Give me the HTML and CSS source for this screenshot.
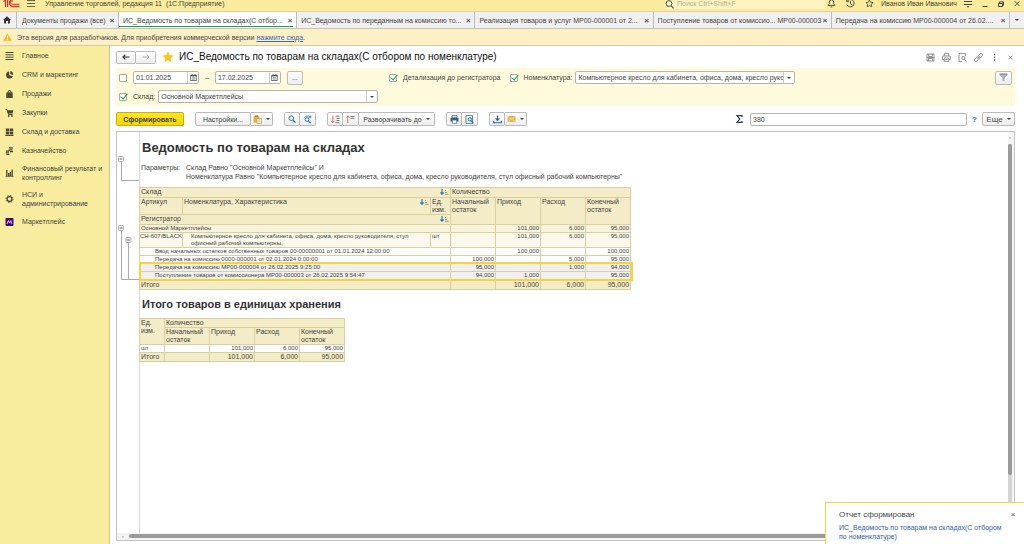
FILE: index.html
```html
<!DOCTYPE html>
<html lang="ru">
<head>
<meta charset="utf-8">
<title>Управление торговлей, редакция 11</title>
<link rel="stylesheet" href="styles.css">
</head>
<body>
<svg class="defs" aria-hidden="true">
  <symbol id="sort" viewBox="0 0 9 6"><path d="M2 0v5M.5 3.5L2 5.2l1.500-1.700" stroke="#2b7fb8" stroke-width="1.200" fill="none"/><path d="M5 1.500h1M5 3.500h2M5 5.300h3.500" stroke="#8a8567" stroke-width=".8"/></symbol>
  <symbol id="cal" viewBox="0 0 7 7"><path d="M.7 1.500h5.600v5H.7z" fill="#fff" stroke="#555" stroke-width=".8"/><path d="M.5 1.800h6M2 .2v1.500M5 .2v1.500" stroke="#444"/><path d="M2 3.700h3M2 5.100h3" stroke="#666" stroke-width=".7"/></symbol>
  <symbol id="star" viewBox="0 0 12 12"><path d="M6 .3l1.700 3.800 4.100.4-3.100 2.700.9 4.100L6 9.200l-3.600 2.100.9-4.100L.2 4.500l4.100-.4z"/></symbol>
</svg>

<header class="topbar">
  <svg class="logo" width="17" height="9" viewBox="0 0 17 9"><g fill="none" stroke="#d8342c" stroke-width="1.300"><path d="M.5 1.500L2.500.2V7M4.600 7V-1"/><path d="M11.500-.5A3.600 3.600 0 1 0 9 6.500h7.500"/><path d="M10.200 1.200A1.700 1.700 0 1 0 9 4.300h7.500" stroke-width="1"/></g></svg>
  <button class="bare" aria-label="Меню"><svg width="8" height="8" viewBox="0 0 8 8"><path d="M0 .5h8M0 3.500h8M0 6.500h8" stroke="#6b6548"/></svg></button>
  <span class="app-title">Управление торговлей, редакция 11&nbsp; (1С:Предприятие)</span>
  <label class="search"><svg width="9" height="9" viewBox="0 0 9 9"><circle cx="4" cy="3.500" r="2.900" fill="none" stroke="#555"/><path d="M6 5.700l2.500 2.600" stroke="#555" stroke-width="1.200"/></svg><input type="text" placeholder="Поиск Ctrl+Shift+F" aria-label="Поиск"></label>
  <div class="top-tools">
    <button class="bare" aria-label="Уведомления"><svg width="9" height="9" viewBox="0 0 9 9"><path d="M1 6.500h7L6.700 5V3a2.200 2.200 0 0 0-4.400 0v2zM3.600 8h1.800" fill="none" stroke="#444" stroke-width=".9"/></svg></button>
    <button class="bare" aria-label="История"><svg width="9" height="9" viewBox="0 0 9 9"><path d="M1.200 2.300A3.700 3.700 0 1 1 .9 5.500M.8.500v2.200H3M4.500 2v2.700l1.800 1" fill="none" stroke="#444" stroke-width=".9"/></svg></button>
    <button class="bare" aria-label="Избранное"><svg width="9" height="9" viewBox="-1 -1 14 14" fill="none" stroke="#444" stroke-width="1.300"><use href="#star" width="12" height="12"/></svg></button>
    <span class="user">Иванов Иван Иванович</span>
    <button class="bare" aria-label="Настройки окна"><svg width="8" height="8" viewBox="0 0 8 8"><path d="M0 1.500h8M0 4.500h8" stroke="#444"/><path d="M2.500 6.200h3L4 7.700z" fill="#444"/></svg></button>
    <button class="bare" aria-label="Свернуть"><svg width="6" height="8" viewBox="0 0 6 8"><path d="M.5 6.500h5" stroke="#444"/></svg></button>
    <button class="bare" aria-label="Развернуть"><svg width="6" height="8" viewBox="0 0 6 8"><path d="M.5 3.500h4v3h-4zM1.500 3V1.900h4v3.600" fill="none" stroke="#444"/></svg></button>
    <button class="bare" aria-label="Закрыть"><svg width="6" height="8" viewBox="0 0 6 8"><path d="M.7 1.200L5.500 6M5.500 1.200L.7 6" stroke="#444" stroke-width=".9"/></svg></button>
  </div>
</header>

<nav class="tabs">
  <button class="home" aria-label="Начальная страница"><svg width="8" height="8" viewBox="0 0 8 8"><path d="M4 .3l4 3.800H6.900V7.500H5V5H3v2.500H1.100V4.100H0z" fill="#333"/></svg></button>
  <div class="tab tab-first"><a href="#">Документы продажи (все)</a><button class="x" aria-label="Закрыть">×</button></div>
  <div class="tab active"><a href="#">ИС_Ведомость по товарам на складах(С отбор...</a><button class="x" aria-label="Закрыть">×</button></div>
  <div class="tab"><a href="#">ИС_Ведомость по переданным на комиссию то...</a><button class="x" aria-label="Закрыть">×</button></div>
  <div class="tab"><a href="#">Реализация товаров и услуг МР00-000001 от 2...</a><button class="x" aria-label="Закрыть">×</button></div>
  <div class="tab"><a href="#">Поступление товаров от комиссио... МР00-000003</a><button class="x" aria-label="Закрыть">×</button></div>
  <div class="tab"><a href="#">Передача на комиссию МР00-000004 от 26.02....</a><button class="x" aria-label="Закрыть">×</button></div>
  <button class="more-tabs" aria-label="Список вкладок"><span class="caret"></span></button>
</nav>

<div class="notice">
  <svg width="9" height="8" viewBox="0 0 9 8"><path d="M4.500.3L8.800 7.700H.2z" fill="#f7bd1c"/><path d="M4.500 2.800v2.500M4.500 6v1" stroke="#fff" stroke-width=".9"/></svg>
  <span>Эта версия для разработчиков. Для приобретения коммерческой версии <a href="#">нажмите сюда</a>.</span>
</div>

<div class="workspace">
  <aside class="sidebar">
    <a href="#"><svg width="8" height="8" viewBox="0 0 8 8"><path d="M0 .5h8M0 2.800h8M0 5.200h8M0 7.500h8" stroke="#4a4636"/></svg><span>Главное</span></a>
    <a href="#"><svg width="8" height="8" viewBox="0 0 8 8"><path d="M3.700.6a3.500 3.500 0 1 0 3.700 4.600L3.700 4.300z" fill="#4a4636"/><path d="M4.800.3a3.300 3.300 0 0 1 2.900 3.400L4.800 3.200z" fill="#4a4636"/></svg><span>CRM и маркетинг</span></a>
    <a href="#"><svg width="8" height="8" viewBox="0 0 8 8"><path d="M.8 2.500h6.400V8H.8z" fill="#4a4636"/><path d="M2.500 4V2a1.500 1.500 0 0 1 3 0v2" fill="none" stroke="#4a4636" stroke-width=".9"/></svg><span>Продажи</span></a>
    <a href="#"><svg width="8" height="8" viewBox="0 0 8 8"><path d="M0 .6h1.500L3 5.500h4" fill="none" stroke="#4a4636"/><path d="M1.800 1.300H8L7 4.600H2.700z" fill="#4a4636"/><circle cx="3.200" cy="7" r=".9" fill="#4a4636"/><circle cx="6.500" cy="7" r=".9" fill="#4a4636"/></svg><span>Закупки</span></a>
    <a href="#"><svg width="8" height="8" viewBox="0 0 8 8"><path d="M.3.500h3.400v3H.3zM4.300.500h3.400v3H4.300zM.3 4h3.400v2.500H.3zM4.300 4h3.400v2.500H4.300zM0 7h8v.9H0z" fill="#4a4636"/></svg><span>Склад и доставка</span></a>
    <a href="#"><svg width="8" height="8" viewBox="0 0 8 8"><path d="M3.500.3h4v1.300h-4zM3 2.200h4v1.200H3zM4.500 4h3v1.200h-3zM.5 3.500h3.300v1.200H.5zM.2 5.300h3.500v1.100H.2zM.8 6.900h3.200V8H.8z" fill="#4a4636"/></svg><span>Казначейство</span></a>
    <a href="#" class="two"><svg width="8" height="8" viewBox="0 0 8 8"><path d="M1.300 1v6M3.200 4v3M4.900 3v4M6.700 .5v6.500" stroke="#4a4636" stroke-width="1.300"/><path d="M0 7.400h8" stroke="#4a4636" stroke-width=".8"/></svg><span>Финансовый результат и контроллинг</span></a>
    <a href="#" class="two"><svg width="8" height="8" viewBox="0 0 8 8"><circle cx="4" cy="4" r="2.400" fill="none" stroke="#4a4636" stroke-width="1.300"/><circle cx="4" cy="4" r="3.500" fill="none" stroke="#4a4636" stroke-width="1" stroke-dasharray="1.300 1.450"/></svg><span>НСИ и администрирование</span></a>
    <a href="#"><svg width="9" height="9" viewBox="0 0 9 9"><rect width="9" height="9" rx="1" fill="#3c0a78"/><path d="M1.800 6.700L3.300 2.800l1.300 3 1.300-3 1.400 3.900" fill="none" stroke="#e7b7f2" stroke-width="1.100"/></svg><span>Маркетплейс</span></a>
  </aside>

  <main class="page">
    <div class="page-head">
      <div class="group">
        <button class="btn nav" aria-label="Назад"><svg width="8" height="6" viewBox="0 0 8 6"><path d="M7.500 3H1M3.300.7L1 3l2.300 2.300" fill="none" stroke="#333" stroke-width="1.200"/></svg></button>
        <button class="btn nav" aria-label="Вперёд"><svg width="8" height="6" viewBox="0 0 8 6"><path d="M.5 3H7M4.700.7L7 3 4.700 5.300" fill="none" stroke="#aaa"/></svg></button>
      </div>
      <svg class="fav" width="12" height="12" viewBox="0 0 12 12" fill="#fbc51d"><use href="#star"/></svg>
      <h1>ИС_Ведомость по товарам на складах(С отбором по номенклатуре)</h1>
      <div class="head-tools">
        <button class="bare" aria-label="Сохранить"><svg width="9" height="9" viewBox="0 0 9 9"><path d="M1 1h7v7H1zM2.700 1v2.500h3.600V1M2.500 8V5.500h4V8M1 4.500h7" fill="none" stroke="#777" stroke-width=".8"/></svg></button>
        <button class="bare" aria-label="Печать"><svg width="9" height="9" viewBox="0 0 9 9"><path d="M2.300 3V.6h4.400V3M2 6.500H.6V3h7.800v3.500H7M2.300 5h4.400v3.400H2.300zM3.300 6.600h2.400" fill="none" stroke="#777" stroke-width=".8"/></svg></button>
        <button class="bare" aria-label="Просмотр"><svg width="9" height="9" viewBox="0 0 9 9"><path d="M4 8.400H1V.6h6.500v2.700" fill="none" stroke="#777" stroke-width=".8"/><circle cx="5.300" cy="5" r="1.600" fill="none" stroke="#777" stroke-width=".8"/><path d="M6.400 6.200l2 2.200" stroke="#777"/></svg></button>
        <button class="bare" aria-label="Ссылка"><svg width="9" height="9" viewBox="0 0 9 9"><g transform="rotate(-45 4.500 4.500)" fill="none" stroke="#777" stroke-width=".8"><rect x="-.5" y="3" width="5" height="3" rx="1.500"/><rect x="4.500" y="3" width="5" height="3" rx="1.500"/><path d="M2.800 4.500h3.400"/></g></svg></button>
        <button class="bare" aria-label="Ещё"><svg width="9" height="9" viewBox="0 0 9 9"><path d="M4 1.500h1.200M4 4.200h1.200M4 7h1.200" stroke="#555" stroke-width="1.300"/></svg></button>
        <button class="bare" aria-label="Закрыть"><svg width="9" height="9" viewBox="0 0 9 9"><path d="M2.700 2.700l3.600 3.600M6.300 2.700L2.700 6.300" stroke="#777" stroke-width=".8"/></svg></button>
      </div>
    </div>

    <section class="filters">
      <div class="filter-row">
        <div class="period">
          <input type="checkbox" aria-label="Период">
          <div class="field date"><input type="text" value="01.01.2025" aria-label="Начало периода"><button aria-label="Календарь"><svg width="7" height="7"><use href="#cal"/></svg></button></div>
          <span>–</span>
          <div class="field date"><input type="text" value="17.02.2025" aria-label="Конец периода"><button aria-label="Календарь"><svg width="7" height="7"><use href="#cal"/></svg></button></div>
          <button class="btn dots">...</button>
        </div>
        <label class="check detail"><input type="checkbox" checked>Детализация до регистратора</label>
        <label class="check"><input type="checkbox" checked>Номенклатура:</label>
        <div class="field item"><select aria-label="Номенклатура"><option>Компьютерное кресло для кабинета, офиса, дома, кресло руководителя</option></select><span class="drop"><span class="caret"></span></span></div>
        <button class="btn funnel" aria-label="Фильтр"><svg width="9" height="9" viewBox="0 0 9 9"><path d="M.5.800h8v1.500L5.700 5v3.500L3.400 7.400V5L.5 2.300z" fill="#a9b3be"/><path d="M.5 1h8" stroke="#7d8893"/></svg></button>
      </div>
      <div class="filter-row">
        <label class="check"><input type="checkbox" checked>Склад:</label>
        <div class="field stock"><select aria-label="Склад"><option>Основной Маркетплейсы</option></select><span class="drop"><span class="caret"></span></span></div>
      </div>
    </section>

    <div class="toolbar">
      <button class="btn primary">Сформировать</button>
      <div class="group">
        <button class="btn settings">Настройки...</button>
        <button class="btn icon wide" aria-label="Варианты"><svg width="9" height="9" viewBox="0 0 9 9"><path d="M.5 1.200h6v6.500h-6z" fill="#e8b04c"/><path d="M2 .3h3v1.700H2z" fill="#b98330"/><path d="M4 3.500h4.500v5H4z" fill="#fff" stroke="#d29a3c" stroke-width=".7"/><path d="M5 5h2.500M5 6.500h2.500" stroke="#d29a3c" stroke-width=".6"/></svg><span class="caret"></span></button>
      </div>
      <div class="group">
        <button class="btn icon" aria-label="Найти"><svg width="8" height="8" viewBox="0 0 8 8"><circle cx="3.300" cy="3.200" r="2.300" fill="#e6f3fb" stroke="#2678ad"/><path d="M5 5l2.500 2.600" stroke="#2678ad" stroke-width="1.300"/></svg></button>
        <button class="btn icon" aria-label="Найти далее"><svg width="9" height="9" viewBox="0 0 9 9"><circle cx="4" cy="4.500" r="1.900" fill="none" stroke="#2678ad"/><path d="M5.500 6l2.300 2.300" stroke="#2678ad" stroke-width="1.200"/><path d="M1 3.300C2.300.6 6 .4 7.500 2.300M7.800.5v2.200H5.600" fill="none" stroke="#2678ad" stroke-width=".8"/></svg></button>
      </div>
      <div class="group">
        <button class="btn icon" aria-label="Развернуть"><svg width="9" height="9" viewBox="0 0 9 9"><path d="M1.800.5v7M.3 6l1.500 1.700L3.300 6" fill="none" stroke="#e0523a" stroke-width=".8"/><path d="M4.500 1.200h4M5.500 3.500h3M5.500 5.500h3M4.500 7.700h4" stroke="#777"/></svg></button>
        <button class="btn icon" aria-label="Свернуть"><svg width="9" height="9" viewBox="0 0 9 9"><path d="M1.800 8V1M.3 2.500L1.800.8l1.500 1.700" fill="none" stroke="#e0523a" stroke-width=".8"/><path d="M4.500 1.500h4M4.500 3.300h4" stroke="#777"/></svg></button>
        <button class="btn expand">Разворачивать до<span class="caret"></span></button>
      </div>
      <div class="group">
        <button class="btn icon" aria-label="Печать"><svg width="9" height="9" viewBox="0 0 9 9"><path d="M2 .7h5v2H2z" fill="#fff" stroke="#35607f" stroke-width=".8"/><path d="M.5 2.800h8v3.700h-8z" fill="#35607f"/><path d="M2.300 5h4.400v3.300H2.300z" fill="#fff" stroke="#35607f" stroke-width=".7"/></svg></button>
        <button class="btn icon" aria-label="Предварительный просмотр"><svg width="9" height="9" viewBox="0 0 9 9"><path d="M1 .600h6.500v7.800H1z" fill="#fff" stroke="#35607f" stroke-width=".8"/><circle cx="4.800" cy="4.300" r="1.700" fill="#cfe7f6" stroke="#1f75ad"/><path d="M6 5.600l2.300 2.600" stroke="#1f75ad" stroke-width="1.300"/></svg></button>
      </div>
      <div class="group">
        <button class="btn icon" aria-label="Сохранить"><svg width="9" height="9" viewBox="0 0 9 9"><path d="M4.500.5V5M2.600 3.400l1.900 2 1.900-2" fill="none" stroke="#1f6691" stroke-width="1.200"/><path d="M.7 5.700v2h7.600v-2" fill="none" stroke="#1f6691" stroke-width="1.100"/></svg></button>
        <button class="btn icon wide" aria-label="Отправить"><svg width="9" height="8" viewBox="0 0 9 8"><path d="M.5 1h8v6h-8z" fill="#eab04a"/><path d="M.8 1.300l3.700 3 3.700-3M.8 6.800l2.500-2.500M8.200 6.800L5.700 4.300" fill="none" stroke="#fff2cf" stroke-width=".7"/></svg><span class="caret"></span></button>
      </div>
      <div class="sum">
        <svg width="7" height="8" viewBox="0 0 7 8"><path d="M6 2V.7H1L3.800 4 1 7.300h5V6" fill="none" stroke="#2a4456" stroke-width="1.200"/></svg>
        <input class="field" type="text" value="380" aria-label="Сумма">
        <button class="bare help" aria-label="Справка">?</button>
        <button class="btn more">Еще<span class="caret"></span></button>
      </div>
    </div>

    <section class="sheet">
      <svg class="tree" width="22" height="150" viewBox="0 0 22 150"><g fill="none" stroke="#aaa"><path d="M4.500 30v18.500H22M4.500 99v48.500H22M11.500 111v36.500"/><g fill="#fff" stroke="#999" stroke-width=".8"><rect x="1.500" y="24.500" width="5" height="5" rx="1"/><rect x="1.500" y="93.500" width="5" height="5" rx="1"/><rect x="9" y="105.500" width="5" height="5" rx="1"/></g><path d="M2.500 27h3M2.500 96h3M10 108h3" stroke="#666"/></g></svg>
      <div class="report">
        <h2>Ведомость по товарам на складах</h2>
        <dl class="params"><dt>Параметры:</dt><dd>Склад Равно "Основной Маркетплейсы" И<br>Номенклатура Равно "Компьютерное кресло для кабинета, офиса, дома, кресло руководителя, стул офисный рабочий компьютерны"</dd></dl>
        <table class="grid main-grid">
          <colgroup><col class="c-art"><col class="c-name"><col class="c-unit"><col class="c-num"><col class="c-num"><col class="c-num"><col class="c-num"></colgroup>
          <thead>
            <tr class="thin"><th colspan="3"><span class="th-in">Склад<svg width="9" height="6"><use href="#sort"/></svg></span></th><th colspan="4">Количество</th></tr>
            <tr><th>Артикул</th><th><span class="th-in">Номенклатура, Характеристика<svg width="9" height="6"><use href="#sort"/></svg></span></th><th>Ед. изм.</th><th rowspan="2">Начальный остаток</th><th rowspan="2">Приход</th><th rowspan="2">Расход</th><th rowspan="2">Конечный остаток</th></tr>
            <tr class="thin"><th colspan="3"><span class="th-in">Регистратор<svg width="9" height="6"><use href="#sort"/></svg></span></th></tr>
          </thead>
          <tbody>
            <tr class="lvl1"><td colspan="3">Основной Маркетплейсы</td><td></td><td class="n">101,000</td><td class="n">6,000</td><td class="n">95,000</td></tr>
            <tr class="lvl2"><td class="art">CH-607/BLACK</td><td class="name">Компьютерное кресло для кабинета, офиса, дома, кресло руководителя, стул офисный рабочий компьютерны,</td><td>шт</td><td></td><td class="n">101,000</td><td class="n">6,000</td><td class="n">95,000</td></tr>
            <tr><td colspan="3" class="doc">Ввод начальных остатков собственных товаров 00-00000001 от 01.01.2024 12:00:00</td><td></td><td class="n">100,000</td><td></td><td class="n">100,000</td></tr>
            <tr><td colspan="3" class="doc">Передача на комиссию 0000-000001 от 02.01.2024 0:00:00</td><td class="n">100,000</td><td></td><td class="n">5,000</td><td class="n">95,000</td></tr>
          </tbody>
          <tbody class="marked">
            <tr><td colspan="3" class="doc">Передача на комиссию МР00-000004 от 26.02.2025 9:25:00</td><td class="n">95,000</td><td></td><td class="n">1,000</td><td class="n">94,000</td></tr>
            <tr><td colspan="3" class="doc">Поступление товаров от комиссионера МР00-000003 от 26.02.2025 9:54:47</td><td class="n">94,000</td><td class="n">1,000</td><td></td><td class="n">95,000</td></tr>
          </tbody>
          <tfoot><tr><td colspan="3">Итого</td><td></td><td class="n">101,000</td><td class="n">6,000</td><td class="n">95,000</td></tr></tfoot>
        </table>
        <h3>Итого товаров в единицах хранения</h3>
        <table class="grid unit-grid">
          <colgroup><col class="c-unit2"><col class="c-num"><col class="c-num"><col class="c-num"><col class="c-num"></colgroup>
          <thead>
            <tr><th rowspan="2">Ед. изм.</th><th colspan="4">Количество</th></tr>
            <tr><th>Начальный остаток</th><th>Приход</th><th>Расход</th><th>Конечный остаток</th></tr>
          </thead>
          <tbody><tr><td>шт</td><td></td><td class="n">101,000</td><td class="n">6,000</td><td class="n">95,000</td></tr></tbody>
          <tfoot><tr><td>Итого</td><td></td><td class="n">101,000</td><td class="n">6,000</td><td class="n">95,000</td></tr></tfoot>
        </table>
      </div>
      <div class="vscroll"><b></b><div class="track"><i></i></div></div>
      <div class="hscroll"><b></b><i></i></div>
    </section>
  </main>
</div>

<div class="toast" role="status">
  <div><strong>Отчет сформирован</strong><button class="x" aria-label="Закрыть">×</button></div>
  <a href="#">ИС_Ведомость по товарам на складах(С отбором по номенклатуре)</a>
</div>
</body>
</html>
```
FILE: styles.css
```css
* { box-sizing: border-box; }
body {
  margin: 0;
  height: 100vh;
  display: flex;
  flex-direction: column;
  overflow: hidden;
  background: #fff;
  color: #444;
  font: 7px/9px "Liberation Sans", Arial, sans-serif;
}
button, input, select { font: inherit; color: inherit; margin: 0; padding: 0; }
button { display: flex; align-items: center; justify-content: center; }
a { color: inherit; text-decoration: none; }
svg { flex: none; display: block; overflow: visible; }
h1, h2, h3, dl, dd { margin: 0; }
.defs { position: absolute; width: 0; height: 0; }
.bare, .x { border: 0; background: none; }
.caret {
  border: 2px solid transparent;
  border-top-color: #444;
  border-bottom: 0;
  width: 0;
}

.topbar {
  display: flex;
  align-items: flex-start;
  height: 12px;
  padding-left: 3px;
  background: #fbec9d;
  border-bottom: 1px solid #dcd3a0;
}
.logo { margin-right: 7px; }
.app-title { margin-left: 10px; line-height: 7px; }
.search {
  display: flex;
  gap: 3px;
  width: 160px;
  height: 9px;
  margin-left: auto;
  background: #fdf3c0;
}
.search input { flex: 1; border: 0; background: none; height: 7px; }
.search input::placeholder { color: #b9b28e; opacity: 1; }
.top-tools { display: flex; align-items: center; gap: 10px; margin: 0 4px 0 2px; height: 7px; }
.user { margin: 0 -3px; line-height: 7px; }

.tabs {
  display: flex;
  height: 17px;
  background: #f0f0f0;
  border-bottom: 1px solid #c9c3ae;
}
.home { width: 16px; border: 0; background: none; padding-right: 3px; }
.tab {
  flex: 1 1 0;
  min-width: 0;
  display: flex;
  align-items: center;
  justify-content: space-between;
  padding: 0 3px 0 4px;
  border-left: 1px solid #bbb;
  white-space: nowrap;
}
.tab-first { flex: 0 0 102px; padding-left: 5px; }
.tab a { flex: 1; min-width: 0; overflow: hidden; }
.x { font-size: 8px; font-weight: bold; line-height: 9px; width: 6px; color: #555; }
.active { position: relative; background: #fff; }
.active::after {
  content: "";
  position: absolute;
  inset: auto 3px 1px 0;
  height: 1px;
  background: #16a65a;
}
.more-tabs { width: 15px; border: 0; border-left: 1px solid #bbb; background: none; }

.notice {
  display: flex;
  align-items: center;
  gap: 5px;
  height: 17px;
  padding-left: 3px;
  background: #fdf0c4;
  border-bottom: 1px solid #d2caa9;
}
.notice a { color: #3a68a8; text-decoration: underline; }

.workspace { flex: 1; min-height: 0; display: flex; }
.sidebar {
  flex: 0 0 110px;
  display: flex;
  flex-direction: column;
  gap: 10px;
  padding: 5px 4px 0 5px;
  background: #faec9e;
  border-right: 1px solid #cfc79c;
}
.sidebar a { display: flex; align-items: center; gap: 8px; }
.sidebar .two { margin: -1px 0; }
.sidebar span { flex: 1; }
.sidebar svg { width: 9px; height: 8px; }

.page {
  flex: 1;
  min-width: 0;
  display: flex;
  flex-direction: column;
  padding: 4px 9px 3px 6px;
}
.page-head { display: flex; align-items: center; height: 14px; }
.group { display: flex; }
.btn {
  height: 14px;
  border: 1px solid #bbb;
  border-radius: 2px;
  background: linear-gradient(#fff, #ededed);
  white-space: nowrap;
}
.group .btn + .btn { border-left: 0; border-radius: 0 2px 2px 0; }
.nav { width: 20px; height: 13px; }
.fav { margin: 0 5px 0 6px; }
h1 { font-size: 10px; line-height: 12px; font-weight: normal; color: #111; }
.head-tools { display: flex; gap: 7px; margin-left: auto; }

.filters {
  display: flex;
  flex-direction: column;
  gap: 6px;
  margin-top: 4px;
  padding: 3px;
  background: #fffadc;
}
.filter-row { display: flex; align-items: center; height: 13px; }
.period { display: flex; align-items: center; width: 270px; gap: 6px; }
.check { display: flex; align-items: center; gap: 6px; white-space: nowrap; margin-right: 3px; }
.detail { margin-right: 9px; }
input[type="checkbox"] {
  appearance: none;
  position: relative;
  width: 8px;
  height: 8px;
  border: 1px solid #aaa;
  border-radius: 1px;
  background: #fff;
}
input[type="checkbox"]:checked::after {
  content: "";
  position: absolute;
  left: 2px;
  top: -2px;
  width: 3px;
  height: 6px;
  border: solid #12a150;
  border-width: 0 1px 1px 0;
  outline: 0;
  transform: rotate(40deg);
}
.field {
  display: flex;
  height: 13px;
  border: 1px solid #b5b5b5;
  border-radius: 2px;
  background: #fff;
}
.field input, .field select {
  flex: 1;
  min-width: 0;
  appearance: none;
  border: 0;
  padding-left: 2px;
  background: none;
}
.date { width: 66px; }
.date button { width: 11px; border: 0; border-left: 1px solid #ccc; background: none; }
.drop { display: flex; align-items: center; justify-content: center; width: 11px; border-left: 1px solid #ccc; }
.dots { width: 16px; }
.item { width: 220px; }
.stock { width: 220px; }
.funnel { width: 17px; margin-left: auto; }

.toolbar { display: flex; align-items: center; gap: 11px; margin: 6px 0 5px; }
.primary {
  width: 68px;
  border-color: #c9ae14;
  background: linear-gradient(#ffe620, #f5d800);
  font-weight: bold;
}
.settings { width: 56px; }
.icon { width: 16px; }
.wide { width: 22px; gap: 4px; }
.expand { width: 76px; gap: 4px; }
.sum { flex: 1; display: flex; align-items: center; gap: 5px; max-width: 279px; margin-left: auto; }
.sum input { flex: 1; min-width: 0; margin-left: 2px; padding-left: 2px; }
.help { color: #2b86c5; font-weight: bold; font-size: 8px; }
.more { width: 33px; gap: 4px; font-size: 8px; }

.sheet {
  flex: 1;
  min-height: 0;
  display: grid;
  grid-template: minmax(0, 1fr) 7px / 22px minmax(0, 1fr) 6px;
  border: 1px solid #c4c4c4;
}
.report { overflow: hidden; box-shadow: inset 1px 0 #d8d8d8; }
h2 { padding: 9px 0 0 3px; font-size: 13px; line-height: 13px; color: #333; }
h3 { padding: 8px 0 7px 3px; font-size: 11px; line-height: 13px; color: #333; }
.params { display: flex; margin: 9px 0 6px; line-height: 9px; white-space: nowrap; }
.params dt { width: 47px; padding-left: 2px; }

.grid { table-layout: fixed; border-collapse: collapse; width: 0; font-size: 6px; line-height: 7px; }
.grid th, .grid td {
  border: 1px solid #d9cf9f;
  padding: 0 1px;
  font-weight: normal;
  text-align: left;
  vertical-align: top;
}
.grid th, .grid tfoot td { background: #f4ecc6; font-size: 7px; line-height: 8px; }
.grid .n { text-align: right; }
.grid tbody td { height: 8px; }
.grid .thin th { height: 10px; }
.grid .art { padding: 0; white-space: nowrap; }
.main-grid { width: 492px; }
.unit-grid { width: 205px; }
.c-art { width: 43px; }
.c-name { width: 248px; }
.c-unit { width: 20px; }
.c-unit2 { width: 25px; }
.c-num { width: 45px; }
.th-in { display: flex; justify-content: space-between; align-items: center; }
.lvl1 td { background: #f8f3da; }
.lvl2 td { background: #fcf9ec; }
.grid .name { padding-left: 8px; padding-right: 20px; }
.grid .doc { padding-left: 15px; }
.marked { position: relative; }
.marked td { background: #f0f0f0; }
.marked::after {
  content: "";
  position: absolute;
  inset: -2px -2px 0 -1px;
  border: 2px solid #fbd13a;
}
.vscroll, .hscroll { display: flex; background: #f4f4f4; }
.vscroll { flex-direction: column; padding-right: 2px; }
.vscroll b, .hscroll b { background: #ccc; width: 2px; height: 2px; }
.vscroll b { margin: 5px 1px; }
.hscroll b { margin: 2px 5px; }
.track { flex: 1; background: #d4d4d4; }
.vscroll i, .hscroll i { display: block; border-radius: 2px; background: #9a9a9a; }
.vscroll i { height: 85%; }
.hscroll { grid-column: 1 / -1; padding: 1px 0 2px; }
.hscroll i { flex: 1; }

.toast {
  position: absolute;
  right: 0;
  bottom: 0;
  width: 199px;
  height: 42px;
  padding: 7px 8px 0 13px;
  border: solid #fbd13a;
  border-width: 1px 0 0 1px;
  background: #fff;
}
.toast div { display: flex; justify-content: space-between; align-items: center; margin-bottom: 4px; }
.toast strong { font-size: 8px; font-weight: normal; }
.toast .x { font-weight: normal; }
.toast a { display: block; width: 170px; color: #2f62b5; }
```
